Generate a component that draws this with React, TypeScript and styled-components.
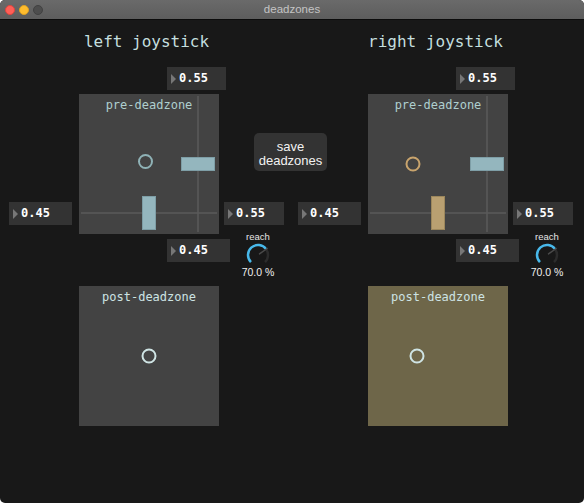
import React from 'react';
import styled, { createGlobalStyle } from 'styled-components';

const Global = createGlobalStyle`
  html, body { margin: 0; padding: 0; background: #ffffff; }
  body { width: 584px; height: 503px; overflow: hidden; }
`;

const MONO = `"DejaVu Sans Mono", "Liberation Mono", monospace`;
const SANS = `"Liberation Sans", Arial, sans-serif`;

const Window = styled.div`
  width: 584px;
  height: 503px;
  display: flex;
  flex-direction: column;
  background: #181818;
  border-radius: 5px;
  overflow: hidden;
`;

const TitleBar = styled.div`
  flex: none;
  height: 19px;
  display: grid;
  grid-template-columns: 1fr auto 1fr;
  align-items: center;
  background: linear-gradient(#6a6a6a, #5d5d5d);
  border-bottom: 1px solid #0b0b0b;
`;

const Lights = styled.div`
  display: flex;
  gap: 4px;
  padding-left: 5px;
`;

const Light = styled.span<{ $color: string; $border: string }>`
  width: 10px;
  height: 10px;
  border-radius: 50%;
  box-sizing: border-box;
  background: ${(p) => p.$color};
  border: 1px solid ${(p) => p.$border};
`;

const WindowTitle = styled.div`
  font: 11.5px/19px ${SANS};
  color: #c4c4c4;
`;

const Canvas = styled.div`
  display: grid;
  grid-template-columns: 63px 7px 140px 5px 60px 14px 63px 7px 140px 5px 60px;
  grid-template-rows: 35px 27px 140px 52px 140px;
  padding: 12px 0 0 9px;
`;

const Heading = styled.h2<{ $col: number }>`
  grid-column: ${(p) => p.$col} / span 5;
  grid-row: 1;
  justify-self: center;
  align-self: start;
  margin: 0;
  font: 400 16px/20px ${MONO};
  color: #c4dfdf;
`;

const NumberBox = styled.div<{
  $col: string;
  $row: number;
  $width: number;
  $offset?: number;
  $top?: number;
  $align?: string;
}>`
  grid-column: ${(p) => p.$col};
  grid-row: ${(p) => p.$row};
  justify-self: start;
  align-self: ${(p) => p.$align ?? 'start'};
  margin-left: ${(p) => p.$offset ?? 0}px;
  margin-top: ${(p) => p.$top ?? 0}px;
  margin-bottom: ${(p) => (p.$align === 'end' ? 9 : 0)}px;
  width: ${(p) => p.$width}px;
  height: 23px;
  box-sizing: border-box;
  display: flex;
  align-items: center;
  gap: 3px;
  padding-left: 4px;
  background: #333333;
  font: 700 12px/23px ${MONO};
  color: #ffffff;
`;

const Arrow = styled.span`
  width: 0;
  height: 0;
  border-top: 5.5px solid transparent;
  border-bottom: 5.5px solid transparent;
  border-left: 5px solid #777777;
`;

const Panel = styled.div<{ $col: number; $row: number; $bg: string }>`
  grid-column: ${(p) => p.$col};
  grid-row: ${(p) => p.$row};
  position: relative;
  width: 140px;
  height: 140px;
  background: ${(p) => p.$bg};
`;

const Plot = styled.svg`
  position: absolute;
  left: 0;
  top: 0;
`;

const PanelTitle = styled.div<{ $color: string }>`
  position: relative;
  padding-top: 4px;
  text-align: center;
  font: 400 12px/14px ${MONO};
  color: ${(p) => p.$color};
`;

const SaveButton = styled.button`
  grid-column: 5 / 8;
  grid-row: 3;
  justify-self: start;
  align-self: start;
  margin: 39px 0 0 30px;
  width: 73px;
  height: 38px;
  padding: 3px 0 0;
  border: none;
  border-radius: 5px;
  background: #333333;
  color: #f2f2f2;
  font: 400 13px/14px ${SANS};
  text-align: center;
`;

const Knob = styled.div<{ $col: number }>`
  grid-column: ${(p) => p.$col};
  grid-row: 4;
  justify-self: center;
  align-self: start;
  margin: -2px 0 0 8px;
  display: flex;
  flex-direction: column;
  align-items: center;
`;

const KnobLabel = styled.div`
  font: 400 9.5px/10px ${SANS};
  color: #e6e6e6;
`;

const KnobValue = styled.div`
  margin-top: -1px;
  font: 400 10.5px/10px ${SANS};
  color: #f0f0f0;
`;

const Dial = () => (
  <svg width="26" height="26" viewBox="0 0 26 26">
    <path d="M21.09 7.12 A10 10 0 0 1 20.07 20.07" fill="none" stroke="#2c2c2c" strokeWidth="2.5" />
    <path d="M5.93 20.07 A10 10 0 1 1 21.09 7.12" fill="none" stroke="#48b8ea" strokeWidth="2.5" />
    <path d="M14.5 11.9 L22.2 6.5" stroke="#4a4a4a" strokeWidth="1.5" strokeLinecap="round" />
  </svg>
);

type Side = {
  base: number;
  title: string;
  markerX: number;
  markerY: number;
  markerColor: string;
  vBarFill: string;
  vBarStroke: string;
  postX: number;
  postBg: string;
};

const Joystick = ({ base, title, markerX, markerY, markerColor, vBarFill, vBarStroke, postX, postBg }: Side) => (
  <>
    <Heading $col={base}>{title}</Heading>
    <NumberBox $col={`${base + 2} / span 3`} $row={2} $width={59} $offset={88}>
      <Arrow />
      0.55
    </NumberBox>
    <NumberBox $col={`${base}`} $row={3} $width={63} $align="end">
      <Arrow />
      0.45
    </NumberBox>
    <Panel $col={base + 2} $row={3} $bg="#434343">
      <Plot width="140" height="140" viewBox="0 0 140 140">
        <line x1="119" y1="2" x2="119" y2="138" stroke="#5a5a5a" strokeWidth="1.5" />
        <line x1="2" y1="119" x2="138" y2="119" stroke="#5a5a5a" strokeWidth="1.5" />
        <circle cx={markerX} cy={markerY} r="6.5" fill="none" stroke={markerColor} strokeWidth="2" />
        <rect x="102.5" y="63.5" width="33" height="13" fill="#94b6be" stroke="#7e9ea6" strokeWidth="1" />
        <rect x="63.5" y="102.5" width="13" height="33" fill={vBarFill} stroke={vBarStroke} strokeWidth="1" />
      </Plot>
      <PanelTitle $color="#afcfcf">pre-deadzone</PanelTitle>
    </Panel>
    <NumberBox $col={`${base + 4}`} $row={3} $width={60} $align="end">
      <Arrow />
      0.55
    </NumberBox>
    <NumberBox $col={`${base + 2} / span 3`} $row={4} $width={63} $offset={88} $top={5}>
      <Arrow />
      0.45
    </NumberBox>
    <Knob $col={base + 4}>
      <KnobLabel>reach</KnobLabel>
      <Dial />
      <KnobValue>70.0 %</KnobValue>
    </Knob>
    <Panel $col={base + 2} $row={5} $bg={postBg}>
      <Plot width="140" height="140" viewBox="0 0 140 140">
        <circle cx={postX} cy="70" r="6.5" fill="none" stroke="#cfe4e4" strokeWidth="2" />
      </Plot>
      <PanelTitle $color="#cde3e3">post-deadzone</PanelTitle>
    </Panel>
  </>
);

export default function App() {
  return (
    <>
      <Global />
      <Window>
        <TitleBar>
          <Lights>
            <Light $color="#fe5f57" $border="#e0443e" />
            <Light $color="#febc2e" $border="#dea123" />
            <Light $color="#4d4d4d" $border="#424242" />
          </Lights>
          <WindowTitle>deadzones</WindowTitle>
          <span />
        </TitleBar>
        <Canvas>
          <Joystick
            base={1}
            title="left joystick"
            markerX={66.5}
            markerY={67.5}
            markerColor="#8fb2b6"
            vBarFill="#94b6be"
            vBarStroke="#7e9ea6"
            postX={70}
            postBg="#434343"
          />
          <SaveButton>
            save
            <br />
            deadzones
          </SaveButton>
          <Joystick
            base={7}
            title="right joystick"
            markerX={45}
            markerY={70}
            markerColor="#c9a46d"
            vBarFill="#b9a071"
            vBarStroke="#9c875c"
            postX={49}
            postBg="#6e6649"
          />
        </Canvas>
      </Window>
    </>
  );
}
